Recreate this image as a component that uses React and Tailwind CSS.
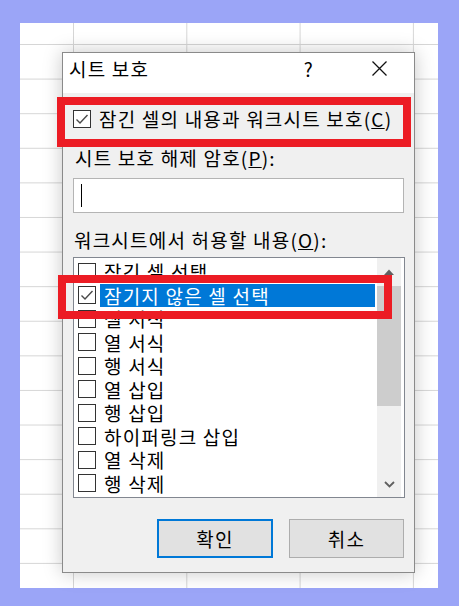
import React from 'react';

const Box = ({ checked }) => (
  <div className="w-[18px] h-[18px] shrink-0 border border-[#333333] bg-white flex items-center justify-center">
    {checked && (
      <svg width="14" height="12" viewBox="0 0 14 12" fill="none">
        <path d="M1.5 6.5 L5 10 L12.5 2" stroke="#4a4a4a" strokeWidth="1.4" />
      </svg>
    )}
  </div>
);

const items = [
  '잠긴 셀 선택',
  '잠기지 않은 셀 선택',
  '셀 서식',
  '열 서식',
  '행 서식',
  '열 삽입',
  '행 삽입',
  '하이퍼링크 삽입',
  '열 삭제',
  '행 삭제',
];

export default function App() {
  return (
    <div className="w-[459px] h-[606px] bg-[#9ba5f7] pt-[23px] pl-[20px] pr-[21px] pb-[18px] font-['Noto_Sans_CJK_KR',sans-serif] text-black text-[19px] leading-none tracking-[1.2px]">
      {/* sheet background */}
      <div className="relative w-full h-full bg-white bg-[linear-gradient(to_right,#d6d6d6_1px,transparent_1px),linear-gradient(to_bottom,#d6d6d6_1px,transparent_1px)] bg-[length:113.3px_34.6px] bg-[position:53px_21px]">
        {/* dialog */}
        <div className="absolute left-[42px] top-[29px] w-[353px] h-[521px] border border-[#8a8a8a] bg-[#f0f0f0] shadow-[0_0_18px_rgba(0,0,0,0.22)] flex flex-col">
          <div className="h-[40px] bg-white flex items-center pl-[6px] pb-[9px] shrink-0">
            <span>시트 보호</span>
            <span className="ml-auto">?</span>
            <svg className="ml-[58px] mr-[27px]" width="15" height="15" viewBox="0 0 15 15">
              <path d="M0.5 0.5 L14.5 14.5 M14.5 0.5 L0.5 14.5" stroke="#111" strokeWidth="1.3" />
            </svg>
          </div>

          <div className="pl-[10px] flex flex-col">
            <div className="mt-[16px] h-[19px] flex items-center gap-[8px]">
              <Box checked />
              <span>
                잠긴 셀의 내용과 워크시트 보호(<span className="underline">C</span>)
              </span>
            </div>

            <div className="mt-[17px] h-[24px] flex items-center pl-[2px]">
              시트 보호 해제 암호(<span className="underline">P</span>):
            </div>

            <div className="mt-[9px] h-[35px] w-[331px] border border-[#b4b4b4] bg-white flex items-center pl-[7px]">
              <div className="w-[1px] h-[23px] bg-black" />
            </div>

            <div className="mt-[14px] h-[24px] flex items-center pl-[1px]">
              워크시트에서 허용할 내용(<span className="underline">O</span>):
            </div>

            <div className="mt-[6px] h-[241px] w-[332px] border border-[#828790] bg-white flex">
              <div className="flex-1 pt-[2px] overflow-hidden">
                {items.map((t, i) => (
                  <div key={t} className="h-[23.5px] flex items-center pl-[4px] pr-[2px]">
                    <Box checked={i === 1} />
                    <div
                      className={
                        i === 1
                          ? 'ml-[4px] flex-1 h-full flex items-center px-[4px] bg-[#0078d7] text-white whitespace-nowrap'
                          : 'ml-[4px] flex-1 h-full flex items-center px-[4px] whitespace-nowrap'
                      }
                    >
                      {t}
                    </div>
                  </div>
                ))}
              </div>
              <div className="w-[24px] mr-[3px] bg-[#f0f0f0] flex flex-col">
                <div className="h-[28px] flex items-center justify-center">
                  <svg width="10" height="6" viewBox="0 0 10 6">
                    <path d="M0 6 L5 0.5 L10 6 Z" fill="#606060" />
                  </svg>
                </div>
                <div className="h-[120px] bg-[#cdcdcd]" />
                <div className="flex-1 flex items-end justify-center pb-[9px]">
                  <svg width="11" height="7" viewBox="0 0 11 7">
                    <path d="M1 1 L5.5 5.5 L10 1" stroke="#606060" strokeWidth="1.8" fill="none" />
                  </svg>
                </div>
              </div>
            </div>

            <div className="mt-[21px] w-[331px] flex justify-end gap-[16px]">
              <button className="w-[116px] h-[39px] border-2 border-[#0078d7] bg-[#e1e1e1]">
                확인
              </button>
              <button className="w-[115px] h-[39px] border border-[#adadad] bg-[#e1e1e1]">
                취소
              </button>
            </div>
          </div>

          {/* red highlight marks */}
          <div className="absolute left-[-6px] top-[44px] w-[354px] h-[50px] border-8 border-[#ec1c24]" />
          <div className="absolute left-[-5px] top-[222px] w-[334px] h-[44px] border-8 border-[#ec1c24]" />
        </div>
      </div>
    </div>
  );
}
